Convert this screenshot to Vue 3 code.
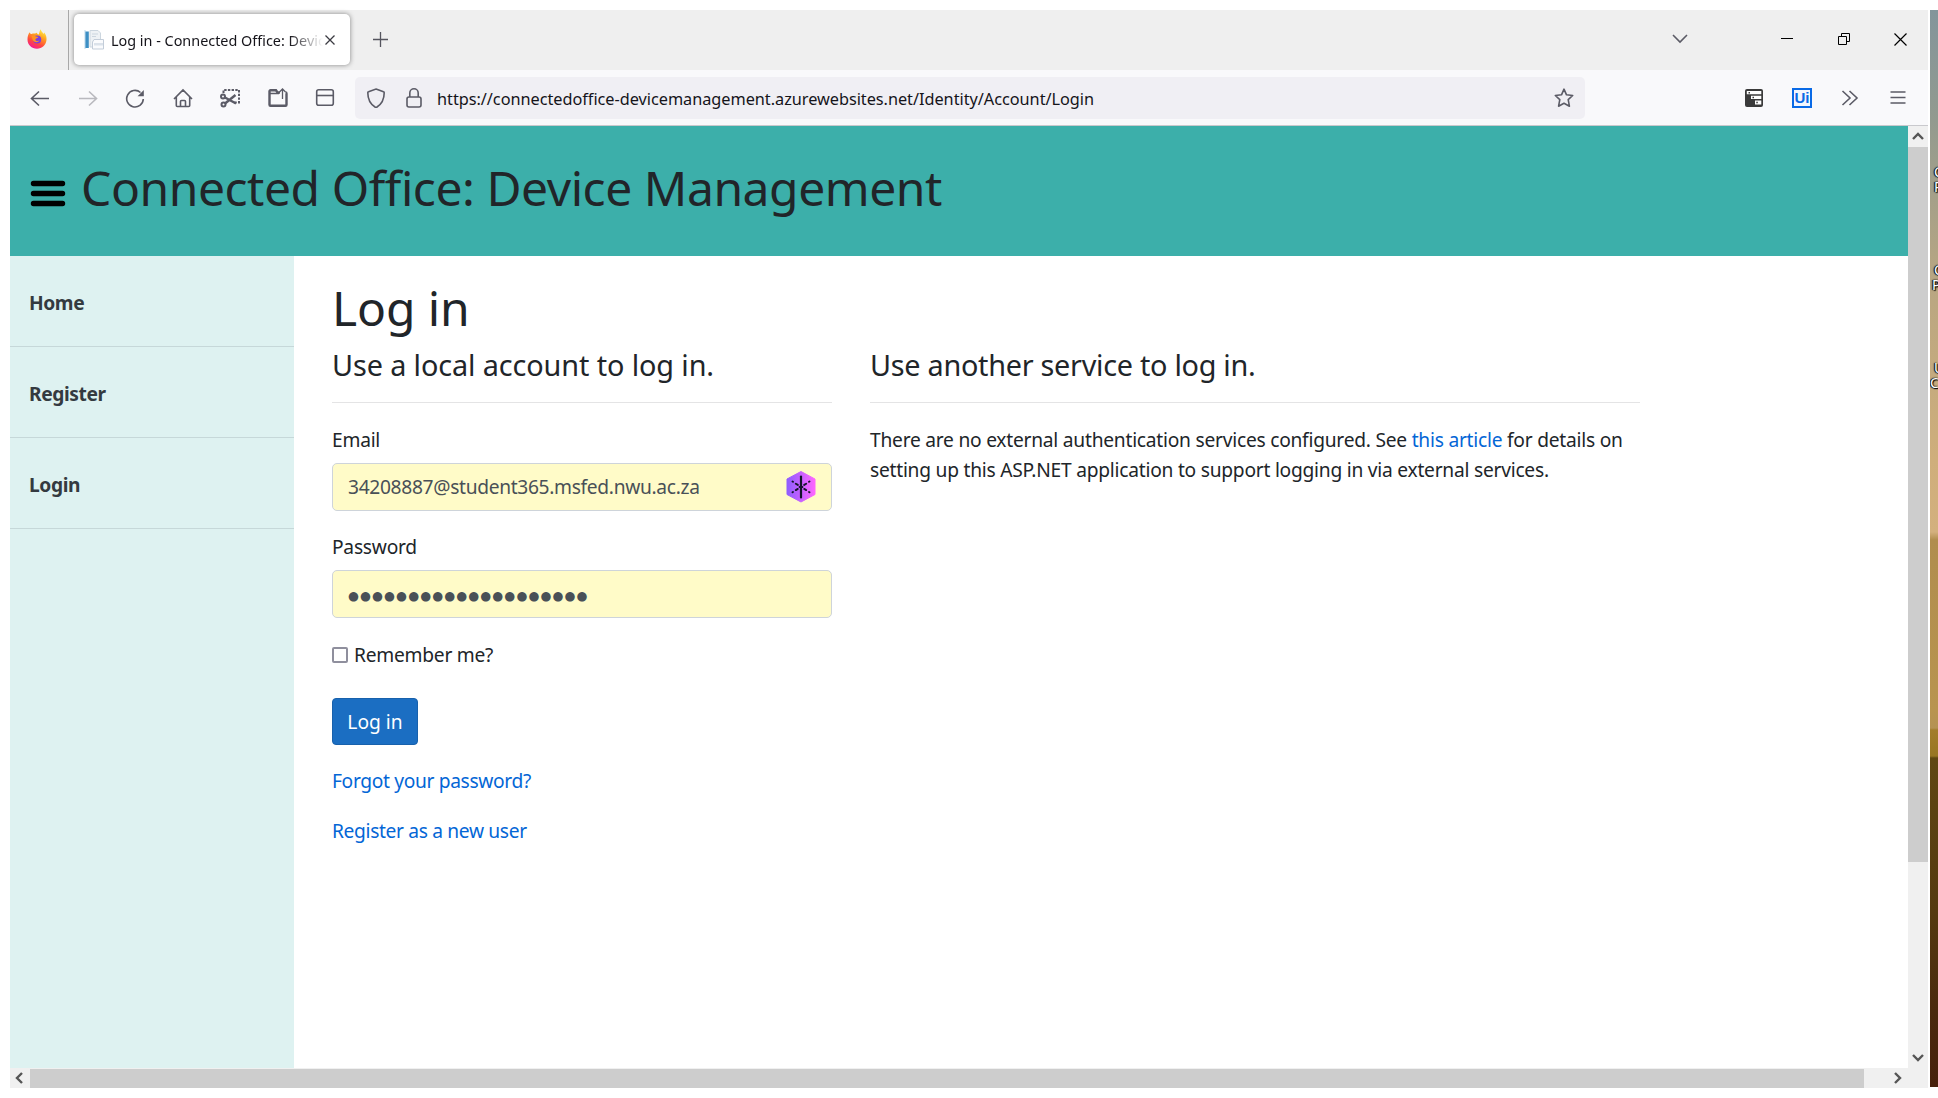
<script setup>
const nav = ['Home', 'Register', 'Login']
const dots = '●'.repeat(20)
const desktopLabels = [
  { t: 'C', x: 4, y: 154 },
  { t: 'P', x: 4, y: 169 },
  { t: 'C', x: 4, y: 252 },
  { t: 'P', x: 2, y: 267 },
  { t: 'U', x: 4, y: 350 },
  { t: 'C', x: 0, y: 365 },
]
</script>

<template>
  <div class="screen">
    <div class="window">
      <div class="tabbar">
        <div class="pinned">
          <svg width="20" height="20" viewBox="0 0 20 20">
            <defs>
              <linearGradient id="fx" x1="0.8" y1="0" x2="0.3" y2="1">
                <stop offset="0" stop-color="#fff44f" /><stop offset="0.35" stop-color="#ffa51f" />
                <stop offset="0.7" stop-color="#ff4a3d" /><stop offset="1" stop-color="#f2189a" />
              </linearGradient>
            </defs>
            <path d="M2.6 3.2 C3 4.4 3.6 4.9 4.6 5 C6 4.4 7 4.4 8 4.6 C9 3.8 9.8 3.8 10 3.7 C9.9 4.6 10.5 5 11.8 5.4 C12.4 3.4 13 1 13.6 .3 C14 2.2 15.6 3.4 16.6 5 L17.2 3.6 C19 5.8 19.8 8.4 19.5 11 C19 16 15 19.7 10 19.7 C4.6 19.7 .5 15.6 .5 10.4 C.5 7.4 1.3 5 2.6 3.2Z" fill="url(#fx)" />
            <circle cx="10.2" cy="10.4" r="4" fill="#7a3ee0" />
            <path d="M4.5 7.2 C6.4 6.4 8 6.8 9.2 7.6 L11.5 8 C10.8 9.4 8.6 9.2 8.4 10.4 C8.4 12 10.6 12.4 12.4 11.6 C11 14.2 6.6 13.8 5.6 10.6Z" fill="#ff9420" />
          </svg>
        </div>
        <div class="tab">
          <svg width="20" height="20" viewBox="0 0 20 20">
            <rect x="0" y="0" width="2" height="19" fill="#dcebf5" />
            <rect x="1.4" y="1.5" width="3.4" height="16.5" fill="#3d8fc4" />
            <path d="M6 .5h8l2.500 2.500v14H6z" fill="#eef2f5" stroke="#ccd6df" />
            <path d="M8 4h6M8 6.500h4" stroke="#ccd6df" />
            <path d="M10 9.500h9.500v9.500H8.500v-7z" fill="#fafbfd" stroke="#c3cdd9" />
            <path d="M10 13h9v2.500h-9z" fill="#dbe2ea" />
          </svg>
          <span class="tab-title">Log in - Connected Office: Device Management</span>
          <svg class="tab-x" width="10" height="10" viewBox="0 0 10 10"><path d="M.5 .5l9 9M9.500 .5l-9 9" stroke="#3b3b42" stroke-width="1.3" /></svg>
        </div>
        <svg class="plus" width="15" height="15" viewBox="0 0 15 15"><path d="M7.500 0v15M0 7.500h15" stroke="#55555e" stroke-width="1.3" /></svg>
        <div class="controls">
          <svg width="16" height="10" viewBox="0 0 16 10"><path d="M1 1l7 7 7-7" fill="none" stroke="#5b5b66" stroke-width="1.6" /></svg>
          <svg class="min" width="12" height="12" viewBox="0 0 12 12"><path d="M0 5.500h12" stroke="#000" /></svg>
          <svg class="restore" width="12" height="12" viewBox="0 0 12 12"><path d="M.5 3.500h8v8h-8zM3.500 3.500v-3h8v8h-3" fill="none" stroke="#000" /></svg>
          <svg width="13" height="13" viewBox="0 0 13 13"><path d="M.5 .5l12 12M12.500 .5l-12 12" stroke="#000" stroke-width="1.2" /></svg>
        </div>
      </div>

      <div class="toolbar">
        <div class="tools">
          <svg viewBox="0 0 20 20"><path d="M19 10.500H2M9 3.500l-7.500 7L9 17.500" class="s" /></svg>
          <svg viewBox="0 0 20 20"><path d="M1 10.500h17M11 3.500l7.500 7L11 17.500" class="s faint" /></svg>
          <svg viewBox="0 0 20 20"><path d="M18.300 11A8.300 8.300 0 1 1 15.500 4.500" class="s" /><path d="M18.800 2v6.200h-6.200z" fill="#5b5b66" /></svg>
          <svg viewBox="0 0 20 20"><path d="M1 11L10 2l9 9M3.300 9v8.500a1 1 0 0 0 1 1h11.400a1 1 0 0 0 1-1V9M7.500 18.500v-5a1 1 0 0 1 1-1h3a1 1 0 0 1 1 1v5" class="s" /></svg>
          <svg viewBox="0 0 20 20"><path d="M3.500 5V2H19v12.500h-5" class="s thick" stroke-dasharray="2.400 1.300" /><circle cx="3" cy="8.500" r="2" class="s thick" /><circle cx="3.500" cy="16.600" r="2" class="s thick" /><path d="M5 9.500l11 6M5 15.500L15.500 7" class="s heavy" /></svg>
          <svg viewBox="0 0 20 20"><path d="M12 4.500H9.500L8 2.300H2.500a1 1 0 0 0-1 1v13.400a1 1 0 0 0 1 1h15a1 1 0 0 0 1-1V5.500a1 1 0 0 0-1-1" class="s heavy" /><path d="M1.500 5.500H11M14.500 11V.8M11.500 4l3-3 3 3" class="s thin" /></svg>
          <svg viewBox="0 0 20 20"><rect x="1.700" y="1.700" width="16.600" height="15.600" rx="2" class="s" /><path d="M2 7.500h16" class="s" /></svg>
        </div>
        <div class="urlbar">
          <svg width="20" height="20" viewBox="0 0 20 20"><path d="M10 1L17.500 3.800a1 1 0 0 1 .7 1C18.200 12 15 16.500 11 19a2 2 0 0 1-2 0C5 16.500 1.800 12 1.800 4.800a1 1 0 0 1 .7-1z" class="s" /></svg>
          <svg class="lock" width="18" height="20" viewBox="0 0 18 20"><rect x="2" y="9" width="14" height="10" rx="2" class="s" /><path d="M4.800 9V5a4.200 4.200 0 0 1 8.400 0v4" class="s" /></svg>
          <span class="url">https://connectedoffice-devicemanagement.azurewebsites.net/Identity/Account/Login</span>
          <svg class="star" width="20" height="20" viewBox="0 0 20 20"><path d="M10 1.200l2.500 5.600 6.200.700-4.500 4.200 1.200 6.500L10 15.200l-5.400 3 1.200-6.500L1.300 7.500l6.200-.700z" class="s" stroke-linejoin="round" /></svg>
        </div>
        <div class="exts">
          <svg viewBox="0 0 20 20"><rect x="1" y="1" width="18" height="18" rx="2" fill="#3a3a3a" /><path d="M2.800 3h14.500v3.300H2.800zM7 7.800h10.300v3.300H7zM11 12.600h6.300v4H11z" fill="#fff" /><path d="M4.500 4.700h1.500M8.500 9.500h1.500M12.300 14.500h1.500" stroke="#3a3a3a" stroke-width="1.500" /></svg>
          <span class="ui">Ui</span>
          <svg viewBox="0 0 20 20"><path d="M2.500 3l7.500 7-7.500 7M9.500 3l7.500 7-7.500 7" class="s" /></svg>
          <svg viewBox="0 0 20 20"><path d="M2.500 4h15M2.500 9.500h15M2.500 15h15" class="s thin" /></svg>
        </div>
      </div>

      <div class="view">
        <div class="page">
          <header class="head">
            <svg width="36" height="27" viewBox="0 0 36 27"><path d="M3.500 3.500h29M3.500 13.500h29M3.500 23.500h29" stroke="#000" stroke-width="5.400" stroke-linecap="round" /></svg>
            <h1 class="brand">Connected Office: Device Management</h1>
          </header>
          <div class="body">
            <nav class="side"><a v-for="n in nav" :key="n">{{ n }}</a></nav>
            <main class="main">
              <h1 class="title">Log in</h1>
              <div class="cols">
                <section class="local">
                  <h4>Use a local account to log in.</h4>
                  <div class="rule"></div>
                  <label class="lbl">Email</label>
                  <div class="field">
                    <span class="val">34208887@student365.msfed.nwu.ac.za</span>
                    <svg width="30" height="34" viewBox="0 0 30 34">
                      <defs><linearGradient id="hx"><stop offset="0" stop-color="#8f5cff" /><stop offset="1" stop-color="#ff66ff" /></linearGradient></defs>
                      <path d="M15 1.500L29 9v15.500L15 32 1 24.500V9z" fill="url(#hx)" stroke="url(#hx)" stroke-width="1" stroke-linejoin="round" />
                      <g stroke="#14142b" stroke-linecap="round">
                        <path d="M15 6.500v21" stroke-width="2.200" />
                        <path d="M6.500 11.500l.5.300M9.800 13.700l2 1.200M23.500 11.500l-.5.300M20.200 13.700l-2 1.200M6.500 22.300l.5-.3M9.800 20.100l2-1.200M23.500 22.300l-.5-.3M20.200 20.100l-2-1.200M13.500 17h3" stroke-width="1.900" />
                      </g>
                    </svg>
                  </div>
                  <label class="lbl">Password</label>
                  <div class="field"><span class="dots">{{ dots }}</span></div>
                  <div class="remember"><i></i><span>Remember me?</span></div>
                  <button class="btn">Log in</button>
                  <a class="lnk">Forgot your password?</a>
                  <a class="lnk second">Register as a new user</a>
                </section>
                <section class="other">
                  <h4>Use another service to log in.</h4>
                  <div class="rule"></div>
                  <p>There are no external authentication services configured. See <a>this article</a> for details on<br />setting up this ASP.NET application to support logging in via external services.</p>
                </section>
              </div>
            </main>
          </div>
        </div>
        <div class="vbar">
          <svg class="up" width="12" height="8" viewBox="0 0 12 8"><path d="M1 7l5-5 5 5" fill="none" stroke="#555" stroke-width="2.400" /></svg>
          <div class="vthumb"></div>
          <svg class="down" width="12" height="8" viewBox="0 0 12 8"><path d="M1 1l5 5 5-5" fill="none" stroke="#555" stroke-width="2.400" /></svg>
        </div>
      </div>
      <div class="hbar">
        <svg class="left" width="8" height="12" viewBox="0 0 8 12"><path d="M7 1L2 6l5 5" fill="none" stroke="#555" stroke-width="2.400" /></svg>
        <div class="hthumb"></div>
        <svg class="right" width="8" height="12" viewBox="0 0 8 12"><path d="M1 1l5 5-5 5" fill="none" stroke="#555" stroke-width="2.400" /></svg>
      </div>
    </div>
    <div class="desktop">
      <span v-for="(d, i) in desktopLabels" :key="i" :style="{ left: d.x + 'px', top: d.y + 'px' }">{{ d.t }}</span>
    </div>
  </div>
</template>

<style>
html, body { margin: 0; background: #fff; }
</style>

<style scoped>
* { box-sizing: border-box; }
svg { display: block; flex: none; }
.screen { width: 1938px; height: 1098px; padding: 10px 0; display: flex; gap: 2px; overflow: hidden; font-family: "Noto Sans", "Open Sans", sans-serif; color: #212529; }
.window { width: 1918px; height: 1078px; margin-left: 10px; flex: none; display: flex; flex-direction: column; }
.tabbar { height: 60px; flex: none; background: #efefef; display: flex; }
.pinned { width: 59px; height: 60px; padding: 19px 0 0 17px; border-right: 1px solid #a8a8a8; }
.tab { width: 276px; height: 51px; margin: 4px 0 0 5px; padding: 0 15px 0 10px; background: #fff; border-radius: 5px; box-shadow: 0 0 5px rgba(0, 0, 0, .45); display: flex; align-items: center; }
.tab-title { width: 212px; margin-left: 7px; padding-top: 2px; overflow: hidden; white-space: nowrap; font-size: 14.4px; color: #15141a; -webkit-mask-image: linear-gradient(90deg, #000 178px, transparent 212px); mask-image: linear-gradient(90deg, #000 178px, transparent 212px); }
.tab-x { margin-left: 2px; }
.plus { margin: 22px 0 0 23px; }
.controls { margin-left: auto; height: 58px; padding-right: 21px; display: flex; align-items: center; }
.min { margin-left: 93px; }
.restore { margin: 0 44px 0 45px; }
.toolbar { height: 56px; flex: none; background: #f9f9fb; border-bottom: 1px solid #c9c9cd; display: flex; align-items: center; }
.tools { display: flex; gap: 27.5px; padding-left: 20px; }
.tools svg, .exts svg { width: 20px; height: 20px; }
.s { fill: none; stroke: #5b5b66; stroke-width: 1.6; }
.thin { stroke-width: 1.3; }
.thick { stroke-width: 2; }
.heavy { stroke-width: 2.4; }
.faint { stroke: #b9b9be; }
.urlbar { width: 1230px; height: 42px; margin-left: 20px; padding: 0 11px; background: #f0eff4; border-radius: 5px; display: flex; align-items: center; }
.lock { margin-left: 19px; }
.url { margin-left: 14px; padding-top: 2px; font-size: 16.3px; letter-spacing: -.03px; color: #15141a; white-space: nowrap; }
.star { margin-left: auto; }
.exts { margin-left: auto; padding-right: 20px; display: flex; gap: 28px; align-items: center; }
.ui { width: 20px; height: 20px; border: 2px solid #0a6ae6; background: #f4f7fd; color: #0a6ae6; font: bold 15px/16px "Liberation Sans", sans-serif; text-align: center; }
.view { height: 942px; flex: none; display: flex; }
.page { width: 1898px; display: flex; flex-direction: column; }
.head { height: 130px; flex: none; background: #3cafaa; padding: 32px 0 0 20px; display: flex; }
.head svg { margin-top: 22px; }
h1, h4 { margin: 0; font-weight: 400; white-space: nowrap; }
.brand, .title { font-size: 48px; line-height: 60px; }
.brand { margin-left: 15px; letter-spacing: -.45px; }
.body { flex: 1; display: flex; background: #fff; }
.side { width: 284px; background: #def2f1; }
.side a { display: block; height: 91px; padding: 32px 19px 0; line-height: 30px; font-weight: 700; font-size: 19.2px; letter-spacing: -.4px; color: #343a40; border-bottom: 1px solid #c6d8d9; }
.main { padding: 22px 0 0 38px; font-size: 19.2px; line-height: 30px; letter-spacing: -.24px; }
.title { letter-spacing: -.1px; }
.cols { display: flex; gap: 38px; margin-top: 9px; }
.local { width: 500px; display: flex; flex-direction: column; align-items: flex-start; }
.other { width: 770px; }
h4 { font-size: 28.8px; line-height: 36px; letter-spacing: -.1px; }
.other h4 { letter-spacing: -.27px; }
.rule { width: 100%; height: 1px; margin: 19px 0 22px; background: #e4e4e5; }
.lbl { height: 30px; }
.field { width: 500px; height: 47.5px; margin: 8px 0 21.5px; padding: 0 15px; border: 1px solid #ced4da; border-radius: 5px; background: #fffbc8; display: flex; align-items: center; justify-content: space-between; color: #495057; white-space: nowrap; }
.val { letter-spacing: -.32px; padding-top: 1px; }
.dots { font: 12.5px/20px "DejaVu Sans", sans-serif; letter-spacing: 1.12px; padding-top: 4px; }
.remember { display: flex; align-items: center; height: 30px; padding-top: 1px; }
.remember i { width: 16px; height: 16px; border: 2px solid #8f8f9d; border-radius: 2px; margin-right: 6px; }
.btn { margin: 28.5px 0 21.5px; width: 86px; height: 47px; padding: 2px 0 0; border: 1px solid #1861ac; border-radius: 4px; background: #1b6ec2; color: #fff; font: inherit; }
a { color: #0366d6; }
.lnk { letter-spacing: -.34px; }
.second { margin-top: 20px; }
p { margin: 0; white-space: nowrap; }
.vbar { width: 20px; background: #f0f0f0; display: flex; flex-direction: column; align-items: center; }
.up { margin: 6px 0 7px; }
.vthumb { width: 20px; height: 715px; background: #cdcdcd; }
.down { margin-top: 192px; }
.hbar { height: 20px; background: #f0f0f0; display: flex; align-items: center; }
.left { margin: 0 7px 0 5px; }
.hthumb { width: 1834px; height: 19px; background: #cdcdcd; }
.right { margin-left: 30px; }
.desktop { width: 8px; height: 1077px; flex: none; position: relative; overflow: hidden; background: linear-gradient(#83959b 0, #929a8f 110px, #b8a682 270px, #cfae7b 450px, #d3b07e 522px, #b08d4e 530px, #b8944f 700px, #b49253 718px, #a27d2b 720px, #987624 746px, #5f4713 748px, #553a10 900px, #4a2a0e 1000px, #47200c 1077px); }
.desktop span { position: absolute; font-size: 14px; line-height: 15px; color: #fff; text-shadow: 0 0 2px #000, 1px 1px 1px #000, -1px 0 1px #000; }
</style>
